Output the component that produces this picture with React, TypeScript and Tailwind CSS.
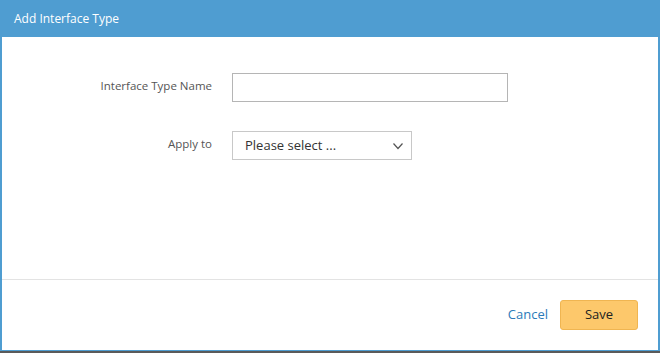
import React from 'react';

const font = { fontFamily: '"Open Sans", "Noto Sans", Arial, sans-serif' };

export default function App() {
    return (
        <div className="w-[660px] h-[353px] bg-[#5a5a5a] flex flex-col" style={font}>
            <div className="flex-1 bg-[#4f9dd1] px-[2px] pb-[1px] flex flex-col">
                {/* Header */}
                <div className="h-[37px] flex items-center pl-[12px] text-[12px] text-white">
                    Add Interface Type
                </div>

                {/* Body */}
                <div className="flex-1 bg-white flex flex-col">
                    <div className="flex-1 pt-[36px] flex flex-col gap-[29px]">
                        <div className="flex items-start">
                            <label className="w-[210px] text-right text-[11.5px] text-[#555] pt-[4px]">Interface Type Name</label>
                            <input
                                type="text"
                                className="ml-[20px] w-[276px] h-[29px] border border-[#b5b5b5] bg-white outline-none px-2 text-[13px]"
                            />
                        </div>
                        <div className="flex items-start">
                            <label className="w-[210px] text-right text-[11.5px] text-[#555] pt-[4px]">Apply to</label>
                            <div className="ml-[20px] w-[180px] h-[29px] border border-[#c8c8c8] bg-white flex items-center justify-between pl-[12px] pr-[7px]">
                                <span className="text-[13px] text-[#333]">Please select ...</span>
                                <svg width="12" height="12" viewBox="0 0 12 12" fill="none">
                                    <path d="M1.5 3.5 L6 8.5 L10.5 3.5" stroke="#555" strokeWidth="1.2" />
                                </svg>
                            </div>
                        </div>
                    </div>

                    {/* Footer */}
                    <div className="h-[71px] border-t border-[#e3e3e3] flex items-start justify-end pt-[20px] pr-[20px] gap-[12px]">
                        <button className="h-[30px] text-[13px] text-[#2b7bb9]">Cancel</button>
                        <button className="w-[78px] h-[30px] rounded-[3px] bg-[#fdc86b] border border-[#f0b551] text-[13px] text-[#222]">
                            Save
                        </button>
                    </div>
                </div>
            </div>
            <div className="h-[2px]" />
        </div>
    );
}
